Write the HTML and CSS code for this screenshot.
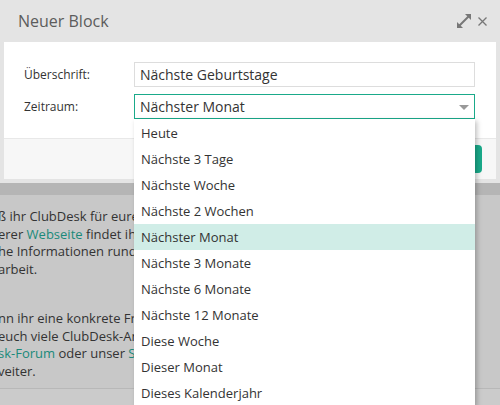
FILE: index.html
```html
<!DOCTYPE html>
<html lang="de">
<head>
    <meta charset="UTF-8">
    <title>Neuer Block</title>
    <link rel="stylesheet" href="styles.css">
</head>
<body>

    <div class="dialog">
        <div class="dialog-header">
            <span class="dialog-title">Neuer Block</span>
            <div class="header-tools">
                <svg class="tool" width="14" height="14" viewBox="0 0 14 14">
                    <path d="M2 12 L12 2" stroke="#777" stroke-width="2" fill="none"/>
                    <path d="M0 14 L0 8 L6 14 Z" fill="#777"/>
                    <path d="M14 0 L8 0 L14 6 Z" fill="#777"/>
                </svg>
                <svg class="tool" width="9" height="9" viewBox="0 0 9 9">
                    <path d="M0.5 0.5 L8.5 8.5 M8.5 0.5 L0.5 8.5" stroke="#777" stroke-width="1.3" fill="none"/>
                </svg>
            </div>
        </div>

        <div class="dialog-body">
            <div class="form-row">
                <label>Überschrift:</label>
                <div class="field">Nächste Geburtstage</div>
            </div>
            <div class="form-row">
                <label>Zeitraum:</label>
                <div class="field select">
                    Nächster Monat
                    <span class="caret"></span>
                </div>
            </div>
        </div>

        <div class="dialog-footer">
            <button class="btn">Speichern</button>
        </div>
    </div>

    <div class="shade"></div>

    <div class="page">
        <p>ß ihr ClubDesk für euren Verein nutzt.<br>
           erer <a href="#">Webseite</a> findet ihr<br>
           he Informationen rund um<br>
           arbeit.</p>
        <p>nn ihr eine konkrete Frage habt,<br>
           euch viele ClubDesk-Anwender<br>
           <a href="#">sk-Forum</a> oder unser <a href="#">Support</a><br>
           veiter.</p>
    </div>
    <div class="page-bottom"></div>

    <!-- open dropdown of the Zeitraum field -->
    <ul class="dropdown">
        <li>Heute</li>
        <li>Nächste 3 Tage</li>
        <li>Nächste Woche</li>
        <li>Nächste 2 Wochen</li>
        <li class="active">Nächster Monat</li>
        <li>Nächste 3 Monate</li>
        <li>Nächste 6 Monate</li>
        <li>Nächste 12 Monate</li>
        <li>Diese Woche</li>
        <li>Dieser Monat</li>
        <li>Dieses Kalenderjahr</li>
    </ul>

</body>
</html>
```

FILE: styles.css
```css
* {
    margin: 0;
    padding: 0;
    box-sizing: border-box;
}

body {
    font-family: 'Open Sans', sans-serif;
    background-color: #c8c8c8;
    color: #333;
    width: 500px;
    height: 405px;
    overflow: hidden;
    position: relative;
}

.dialog {
    background: #e4e4e4;
    padding: 0 4px 4px;
}

.dialog-header {
    height: 42px;
    display: flex;
    align-items: center;
    justify-content: space-between;
    padding: 0 9px 0 14px;
}

.dialog-title {
    font-size: 16px;
    color: #5c5c5c;
}

.header-tools {
    display: flex;
    align-items: center;
    gap: 7px;
}

.dialog-body {
    background: #fff;
    padding: 20px 21px 19px 20px;
    display: flex;
    flex-direction: column;
    gap: 7px;
}

.form-row {
    display: flex;
    align-items: center;
}

.form-row label {
    width: 110px;
    font-size: 12px;
}

.field {
    flex: 1;
    height: 25px;
    border: 1px solid #ddd;
    padding: 0 5px;
    font-size: 14px;
    line-height: 23px;
}

.select {
    position: relative;
    border-color: #1aaa8a;
}

.caret {
    position: absolute;
    right: 5px;
    top: 10px;
    border-left: 5px solid transparent;
    border-right: 5px solid transparent;
    border-top: 5px solid #999;
}

.dialog-footer {
    background: #f7f7f7;
    border-top: 1px solid #e8e8e8;
    height: 41px;
    display: flex;
    align-items: center;
    justify-content: flex-end;
    padding-right: 14px;
}

.btn {
    background: #1aaa8a;
    color: #fff;
    border: none;
    border-radius: 4px;
    height: 28px;
    width: 80px;
    font-family: inherit;
    font-size: 13px;
}

.shade {
    height: 12px;
    background: #b5b5b5;
}

.page {
    height: 193px;
    padding-top: 13px;
    font-size: 13px;
    line-height: 17.7px;
    margin-left: -2px;
}

.page p {
    margin-bottom: 31px;
    white-space: nowrap;
}

.page a {
    color: #1a8a7a;
    text-decoration: none;
}

.page-bottom {
    border-top: 1px solid #b8b8b8;
    height: 20px;
    background: #cbcbcb;
}

.dropdown {
    position: absolute;
    left: 134px;
    top: 119px;
    width: 341px;
    background: #fff;
    list-style: none;
    box-shadow: 2px 2px 5px rgba(0, 0, 0, 0.25);
    padding-top: 1px;
}

.dropdown li {
    height: 26px;
    line-height: 26px;
    padding-left: 7px;
    font-size: 13px;
}

.dropdown li.active {
    background: #d0ede7;
}
```
